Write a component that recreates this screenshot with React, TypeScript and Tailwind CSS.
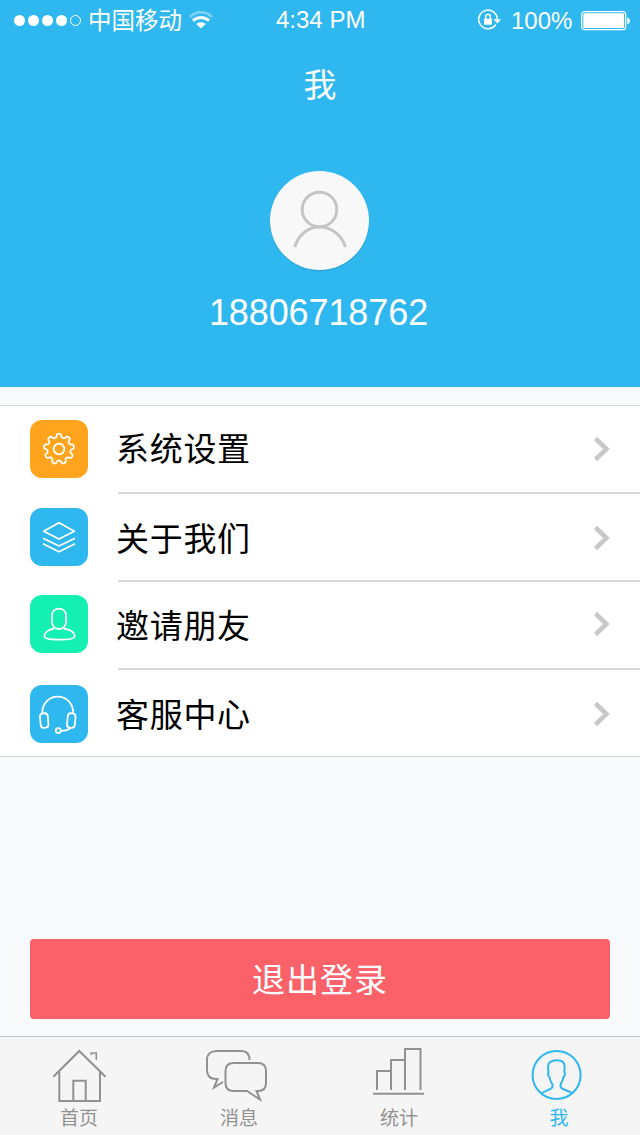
import React from "react";

const TEETH = 9;

// Outline of the settings gear, centred on 29,29
function gearPath() {
  const steps = TEETH * 24;
  let d = "";
  for (let i = 0; i < steps; i++) {
    const angle = (i / steps) * Math.PI * 2;
    const wave = Math.tanh(2.2 * Math.cos(angle * TEETH)) / Math.tanh(2.2);
    const radius = 13.4 + wave * 1.7;
    const x = 29 + Math.sin(angle) * radius;
    const y = 29 - Math.cos(angle) * radius;
    d += `${i === 0 ? "M" : "L"}${x.toFixed(2)} ${y.toFixed(2)}`;
  }
  return d + "Z";
}

const menuItems = [
  {
    label: "系统设置",
    color: "bg-[#ffa41c]",
    iconOffset: "pt-[14px]",
    textOffset: "pt-[15px]",
    arrowOffset: "pt-[30px]",
    icon: (
      <>
        <path d={gearPath()} />
        <circle cx="29" cy="29" r="5.3" />
      </>
    ),
  },
  {
    label: "关于我们",
    color: "bg-[#2eb8ef]",
    iconOffset: "pt-[14px]",
    textOffset: "pt-[17px]",
    arrowOffset: "pt-[31px]",
    icon: (
      <>
        <path d="M29 14.7 44.3 23.2 29 31 13.7 23.2Z" />
        <path d="M13 30.2 29 38 45 30.2M13 35.8 29 43.8 45 35.8" />
      </>
    ),
  },
  {
    label: "邀请朋友",
    color: "bg-[#14efb2]",
    iconOffset: "pt-[13px]",
    textOffset: "pt-[16px]",
    arrowOffset: "pt-[29px]",
    icon: (
      <>
        <path d="M29 13.7c-4.2 0-7 2.8-7 7v5.6c0 4.5 2.8 7.7 7 7.7s7-3.2 7-7.7v-5.6c0-4.2-2.8-7-7-7Z" />
        <path d="M24.3 33.5C18.5 34.5 14.3 37.500 14.3 41.3c0 2.3 5.5 3.400 14.7 3.400s15.700-1.100 15.700-3.400c0-3.800-4.700-6.800-11-7.800" />
      </>
    ),
  },
  {
    label: "客服中心",
    color: "bg-[#2eb8ef]",
    iconOffset: "pt-[15px]",
    textOffset: "pt-[17px]",
    arrowOffset: "pt-[31px]",
    icon: (
      <>
        <path d="M12.3 28.5C12 19 18.5 11.7 27.7 11.7S43.5 19 43.2 28.5" />
        <rect x="10.3" y="28.3" width="7.8" height="14.5" rx="3.2" transform="rotate(-5 14 35.5)" />
        <rect x="37.4" y="28.3" width="7.8" height="14.5" rx="3.2" transform="rotate(5 41.5 35.5)" />
        <path d="M40.5 43c-2 2-5 2.8-9.5 2.8" />
        <circle cx="28.3" cy="45.6" r="2.5" />
      </>
    ),
  },
];

const tabs = [
  {
    label: "首页",
    active: false,
    icon: (
      <>
        <path d="M4.3 30.8 30.3 5 56.500 30.8" />
        <path d="M10.3 26v29h40.700V26" />
        <path d="M24.3 55V34.800h12.400V55" />
        <path d="M42.300 9V7h5v7" strokeWidth="1.500" />
      </>
    ),
  },
  {
    label: "消息",
    active: false,
    icon: (
      <>
        <path d="M40.500 14c0-6-3-9-8-9H7.500c-6 0-9.500 3.500-9.500 9v10c0 5.500 3 9 9.500 9h1L5 41.500 14 36" />
        <path d="M24.500 17h24.500c5 0 8 3 8 8v12c0 5-3 8-8 8h-1.500l3.500 8.500L38 45H24.500c-5 0-8-3-8-8V25c0-5 3-8 8-8Z" />
      </>
    ),
  },
  {
    label: "统计",
    active: false,
    icon: (
      <>
        <path d="M8 44V25h14m0 19V14h14m0 30V3h15.500v41" />
        <path d="M4 47.700h51" />
      </>
    ),
  },
  {
    label: "我",
    active: true,
    icon: (
      <>
        <circle cx="27.600" cy="29" r="24" />
        <path d="M12.700 47.300c3.500-2.600 7.600-3 10-5.300 1.200-1.200.9-3.500 0-5-1.300-2-2-4-2.200-6-1.400-.8-2-3.500-1-4.800-.5-3-.8-6.700.3-8.700 1.700-2.200 4.500-3.200 8-3.200 5 0 7.800 2 7.800 6.200 0 2 0 4-.3 5.700 1.300 1 .6 4.200-.9 5-.2 2-1 4-2 5.500-.9 1.500-1.200 4 0 5.300 2.200 2.300 7.400 2.600 10.900 5.300" />
      </>
    ),
  },
];

function StatusBar() {
  return (
    <div className="flex h-10 items-center text-white">
      <div className="flex w-[276px] items-center pl-[14px]">
        <div className="flex items-center gap-[3px]">
          {[0, 1, 2, 3].map((dot) => (
            <span key={dot} className="size-[11px] rounded-full bg-white" />
          ))}
          <span className="size-[11px] rounded-full border border-white" />
        </div>
        <span className="ml-[7px] pt-[2px] text-[23.5px] leading-[38px]">中国移动</span>
        <svg className="ml-[6px] h-[18px] w-[26px]" viewBox="0 0 26 18" fill="none" stroke="white" strokeWidth="3">
          <path d="M2 6C8.500-.2 17.500-.2 24 6" opacity=".4" strokeWidth="2.500" />
          <path d="M5 9.700c4.800-4.200 11.200-4.200 16 0" />
          <path d="M8.300 13c2.700-2.500 6.700-2.500 9.400 0L13 17.500Z" fill="white" stroke="none" />
        </svg>
      </div>
      <span className="w-[201px] text-[24px] leading-10">4:34 PM</span>
      <svg className="h-[22px] w-6" viewBox="0 0 24 22" fill="none" stroke="white" strokeWidth="1.5">
        <path d="M18.800 15.500A9.300 9.300 0 1 1 20.300 10.500" />
        <path d="M16.500 10.200h7.500L20.500 14.500Z" fill="white" stroke="none" />
        <path d="M8.700 10V7.500a2.300 2.300 0 0 1 4.600 0V10" />
        <path d="M7 9.700h8v6H7Z" fill="white" stroke="none" />
      </svg>
      <span className="ml-[10px] w-[70px] pt-[2px] text-[24px] leading-[38px]">100%</span>
      <svg className="mt-[2px] h-5 w-[50px]" viewBox="0 0 50 20">
        <rect x=".7" y=".7" width="44" height="18" rx="3" fill="none" stroke="white" strokeWidth="1.200" />
        <rect x="2.300" y="2.300" width="40.800" height="14.800" rx="1.500" fill="white" />
        <path d="M46.300 6.500c3.500.7 3.500 6 0 6.700Z" fill="white" />
      </svg>
    </div>
  );
}

export default function App() {
  return (
    <div className="flex h-[1135px] w-[640px] flex-col overflow-hidden bg-[#f8f9fb] font-['Liberation_Sans','Noto_Sans_CJK_SC',sans-serif]">
      <header className="h-[387px] shrink-0 bg-[#2eb8ef] text-white">
        <StatusBar />
        <h1 className="pt-6 text-center text-[33px] leading-[44px]">我</h1>
        <div className="mt-[63px] ml-[270px] size-[99px] rounded-full bg-[#f8f8f8] shadow-[0_1px_1px_rgba(0,0,0,0.15)]">
          <svg className="size-[99px]" viewBox="0 0 99 99" fill="none" stroke="#c5c5c5" strokeWidth="3">
            <circle cx="49.500" cy="38.500" r="17.300" />
            <path d="M24.700 76C28.500 64 37.500 56 49.500 56S71.500 64 75.500 76" />
          </svg>
        </div>
        <p className="mt-[21px] pr-[3px] text-center text-[36px] leading-[44px] tracking-[-0.1px]">18806718762</p>
      </header>

      <ul className="mt-[18px] h-[352px] shrink-0 border-y border-[#d4d5d6] bg-white">
        {menuItems.map((item, i) => {
          const last = i === menuItems.length - 1;
          return (
            <li key={item.label} className={`flex pl-[30px] ${last ? "h-[86px]" : "h-[88px]"}`}>
              <div className={`${item.iconOffset} shrink-0`}>
                <svg
                  className={`size-[58px] rounded-[12px] ${item.color}`}
                  viewBox="0 0 58 58"
                  fill="none"
                  stroke="white"
                  strokeWidth="1.800"
                  strokeLinejoin="round"
                >
                  {item.icon}
                </svg>
              </div>
              <div className={`ml-[30px] flex flex-1 border-[#d9d9d9] ${last ? "" : "border-b-2"}`}>
                <span className={`${item.textOffset} -ml-[2px] flex-1 text-[33px] leading-[58px] tracking-[0.7px] text-black`}>
                  {item.label}
                </span>
                <div className={`${item.arrowOffset} mr-[30px] shrink-0`}>
                  <svg className="h-[26px] w-[18px]" viewBox="0 0 18 26" fill="none" stroke="#c8c8c8" strokeWidth="4.500">
                    <path d="M3.500 2.500 14.500 13 3.500 23.500" />
                  </svg>
                </div>
              </div>
            </li>
          );
        })}
      </ul>

      <button className="mx-[30px] mt-[182px] h-20 shrink-0 rounded-[4px] bg-[#fa6168] pt-[3px] text-[33px] tracking-[1px] text-white">
        退出登录
      </button>

      <nav className="mt-auto grid h-[99px] shrink-0 grid-cols-4 border-t border-[#c3c5c8] bg-[#f5f5f5]">
        {tabs.map((tab) => (
          <a
            key={tab.label}
            className={`flex flex-col items-center pr-[2px] ${tab.active ? "text-[#2eb8ef]" : "text-[#919191]"}`}
          >
            <svg
              className="mt-[9px] h-[58px] w-[60px] shrink-0 overflow-visible"
              viewBox="0 0 60 58"
              fill="none"
              stroke="currentColor"
              strokeWidth="2"
            >
              {tab.icon}
            </svg>
            <span className="pt-[2px] text-[19px] leading-[26px]">{tab.label}</span>
          </a>
        ))}
      </nav>
    </div>
  );
}
